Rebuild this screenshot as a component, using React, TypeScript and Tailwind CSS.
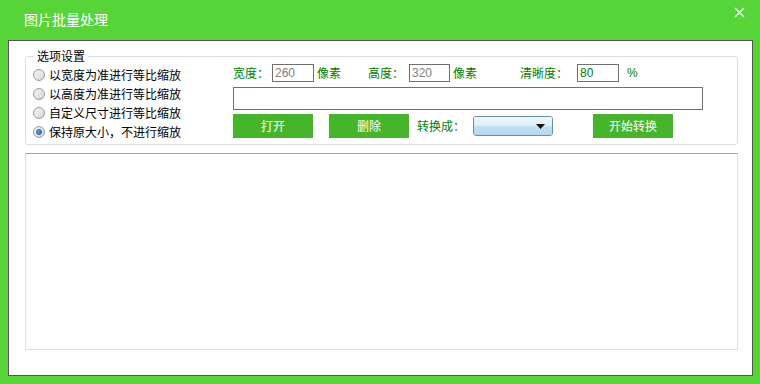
import React from 'react';

const FONT = { fontFamily: '"Noto Sans CJK SC", "Noto Sans", sans-serif' };

const options = [
    '以宽度为准进行等比缩放',
    '以高度为准进行等比缩放',
    '自定义尺寸进行等比缩放',
    '保持原大小，不进行缩放',
];

const Radio: React.FC<{ checked?: boolean; label: string }> = ({ checked, label }) => (
    <div className="flex h-[19px] items-center">
        <span className="flex h-[12px] w-[12px] items-center justify-center rounded-full border border-[#9a9a9a] bg-gradient-to-br from-[#f4f4f4] to-[#d6d6d6]">
            {checked && (
                <span className="h-[6px] w-[6px] rounded-full border border-[#1d5fa8] bg-gradient-to-br from-[#6cb4f0] to-[#1f6fc4]" />
            )}
        </span>
        <span className="ml-[4px] text-[12px] leading-none text-black">{label}</span>
    </div>
);

const GreenButton: React.FC<{ label: string; className?: string }> = ({ label, className }) => (
    <div
        className={`flex h-[24px] w-[80px] items-center justify-center bg-[#47b52c] text-[12px] text-white ${className || ''}`}
    >
        {label}
    </div>
);

const SmallInput: React.FC<{ value: string; w: string; green?: boolean }> = ({ value, w, green }) => (
    <div
        className={`flex h-[18px] ${w} items-center border border-[#707070] bg-white pl-[2px] text-[12px] leading-none ${green ? 'text-[#008000]' : 'text-[#808080]'}`}
        style={{ fontFamily: '"Liberation Sans", sans-serif' }}
    >
        {value}
    </div>
);

export default function App() {
    return (
        <div className="flex h-[384px] w-[760px] flex-col bg-[#56d438]" style={FONT}>
            {/* title bar */}
            <div className="relative flex h-[40px] shrink-0 items-center pl-[24px] pb-[2px]">
                <span className="text-[14px] text-white">图片批量处理</span>
                <svg className="absolute left-[734px] top-[7px]" width="11" height="11" viewBox="0 0 11 11">
                    <path d="M1 1 L10 10 M10 1 L1 10" stroke="white" strokeWidth="1.4" fill="none" />
                </svg>
            </div>

            {/* body */}
            <div className="ml-[8px] mr-[7px] h-[336px] shrink-0 border border-[#555555] bg-white pl-[16px] pr-[14px] pt-[15px]">
                {/* group box */}
                <div className="relative flex h-[89px] rounded-[3px] border border-[#d5dfe5]">
                    <span className="absolute left-[8px] top-[-9px] bg-white px-[3px] text-[12px] leading-[16px] text-black">
                        选项设置
                    </span>
                    <div className="flex w-[207px] flex-col pl-[7px] pt-[8px]">
                        {options.map((o, i) => (
                            <Radio key={o} label={o} checked={i === 3} />
                        ))}
                    </div>
                    <div className="flex flex-col pt-[7px] text-[12px] text-[#008000]">
                        <div className="flex h-[18px] items-center">
                            <span className="w-[39px]">宽度：</span>
                            <SmallInput value="260" w="w-[42px]" />
                            <span className="ml-[3px] w-[51px]">像素</span>
                            <span className="w-[41px]">高度：</span>
                            <SmallInput value="320" w="w-[41px]" />
                            <span className="ml-[3px] w-[67px]">像素</span>
                            <span className="w-[57px]">清晰度：</span>
                            <SmallInput value="80" w="w-[42px]" green />
                            <span className="ml-[8px]" style={{ fontFamily: '"Liberation Sans", sans-serif' }}>%</span>
                        </div>
                        <div className="mt-[5px] h-[23px] w-[470px] border border-[#707070] bg-white" />
                        <div className="mt-[4px] flex h-[24px] items-center">
                            <GreenButton label="打开" />
                            <GreenButton label="删除" className="ml-[16px]" />
                            <span className="ml-[8px] w-[56px]">转换成：</span>
                            <div className="relative flex h-[20px] w-[80px] flex-col overflow-hidden rounded-[3px] border border-[#6a8db0]">
                                <div className="h-1/2 bg-gradient-to-b from-[#f0f8fc] to-[#dcedf8]" />
                                <div className="h-1/2 bg-gradient-to-b from-[#c4e1f2] to-[#b4d6ec]" />
                                <svg className="absolute right-[7px] top-[7px]" width="9" height="5" viewBox="0 0 9 5">
                                    <path d="M0 0 H9 L4.5 5 Z" fill="#111" />
                                </svg>
                            </div>
                            <GreenButton label="开始转换" className="ml-[40px]" />
                        </div>
                    </div>
                </div>

                {/* list box */}
                <div className="mt-[8px] h-[197px] border border-[#dcdfe3] border-t-[#a0a0a0] bg-white" />
            </div>
        </div>
    );
}
